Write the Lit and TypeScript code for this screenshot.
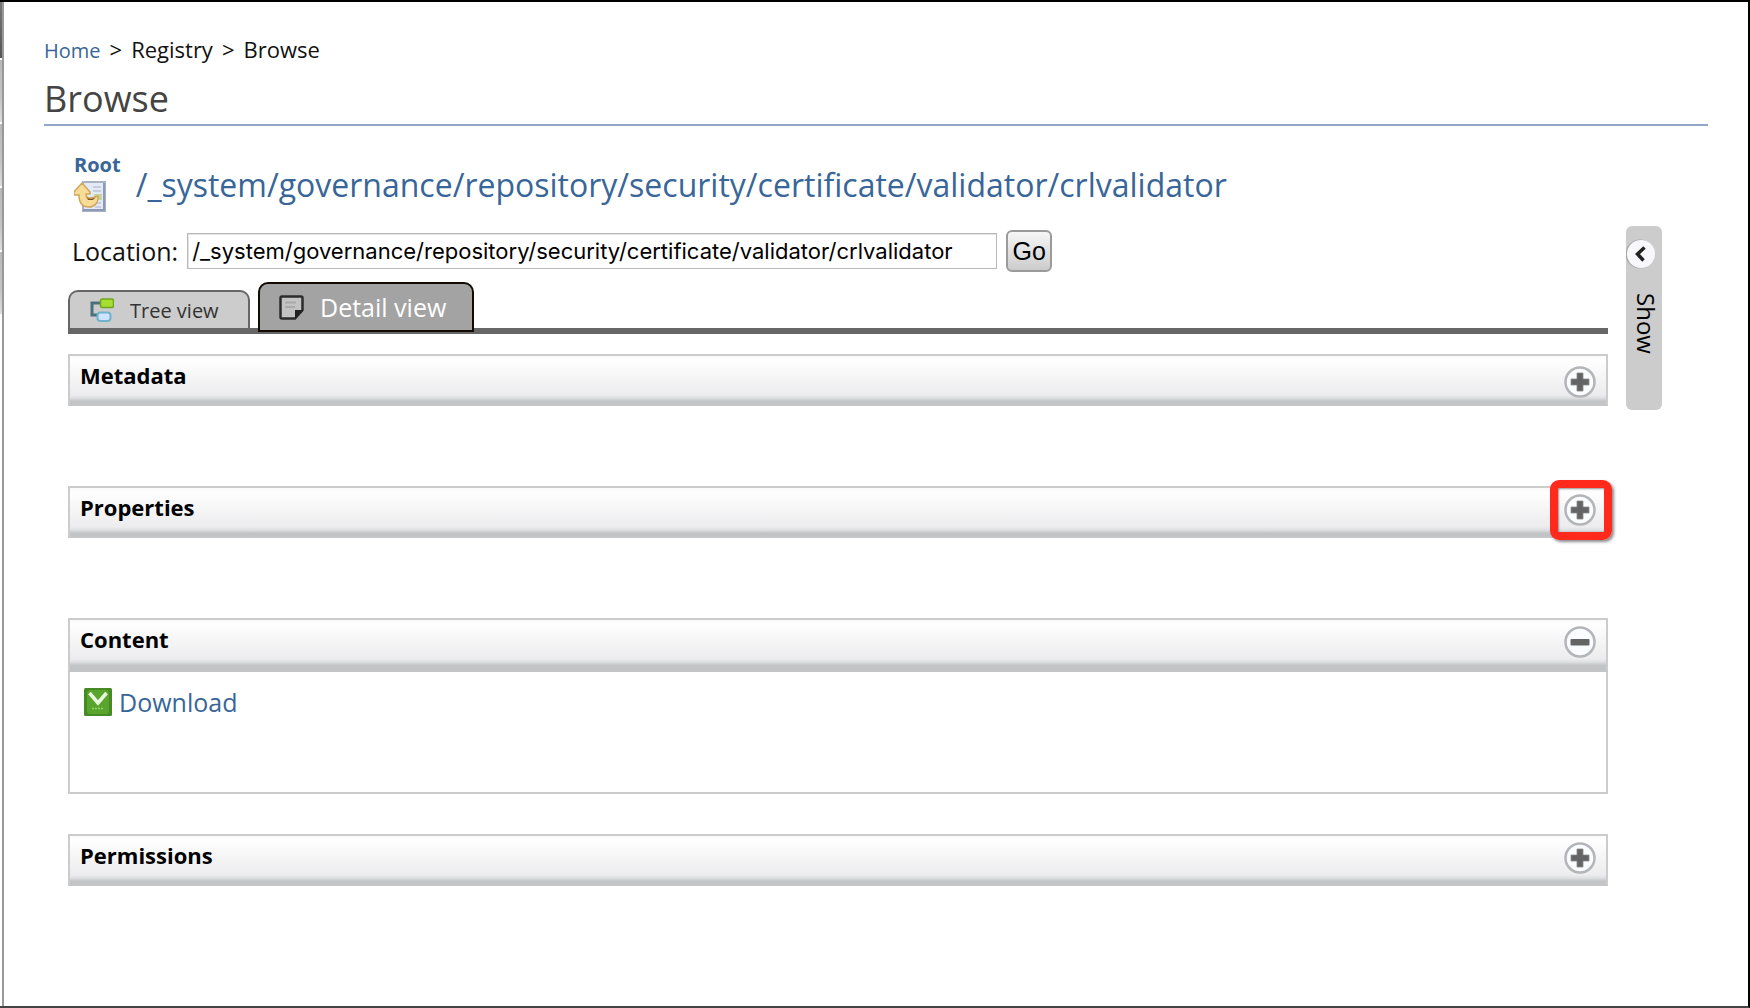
import { LitElement, html, css, svg } from "lit";
import { customElement, property, state } from "lit/decorators.js";

const RESOURCE_PATH = "/_system/governance/repository/security/certificate/validator/crlvalidator";

const pathIcon = svg`
  <path d="M9 1H31V30H9Z" fill="#e4eaf5" stroke="#a9b2c4" stroke-width="2"/>
  <path d="M29 2H31V30H9V28H29Z" fill="#8c9ab5"/>
  <path d="M19 6h8M19 10h8M21 22h6M21 26h6" stroke="#b9c4da" stroke-width="1.5"/>
  <path d="M20 13h8v6h-8z" fill="#c2d79f"/>
  <path d="M8 2L16 11V13H12C12 18 16 18 24 15C25 22 20 26 15 26C8 26 5 21 5 14H0V11Z" fill="#f7dc96" stroke="#cfa75c" stroke-width="1.5" stroke-linejoin="round"/>
  <path d="M12 15C14 19 19 18 22 16L19 19H14Z" fill="#7d5a25"/>`;

@customElement("registry-section")
export class RegistrySection extends LitElement {
  @property() heading = "";
  @property({ type: Boolean, reflect: true }) open = false;
  @property({ type: Boolean, reflect: true }) marked = false;
  @property({ type: Boolean, reflect: true }) lead = false;

  static styles = css`
    :host { display: block; }
    .head {
      display: flex; align-items: flex-start; justify-content: space-between;
      box-sizing: border-box; height: 52px;
      border: 2px solid #ccc; border-bottom-color: #c4c5c6;
      background: linear-gradient(#fafafa 0, #fefefe 5px, #ececee 39px, #dfe0e1 42px, #c4c5c7 45px, #c2c3c5 100%);
    }
    .head.open { height: 54px; }
    h2 { margin: 0; padding: 4px 0 0 10px; font-size: 22px; line-height: 30px; font-weight: 700; color: #000; }
    .toggle {
      position: relative; display: block; width: 32px; height: 32px; margin: 6px 10px 0 0; padding: 0;
      border: 0; background: none; cursor: pointer;
    }
    .head.lead .toggle { margin-top: 10px; }
    .toggle svg { display: block; }
    .ring {
      position: absolute; left: -14px; top: -14px; box-sizing: border-box; width: 62px; height: 60px;
      border: 8px solid #ff2a1c; border-radius: 9px; pointer-events: none;
      box-shadow: 2px 2px 3px rgba(0, 0, 0, .45), inset 1px 1px 2px rgba(0, 0, 0, .4);
    }
    .body { box-sizing: border-box; min-height: 122px; padding: 14px; border: 2px solid #ccc; border-top: 0; }
  `;

  private toggle() {
    this.open = !this.open;
  }

  render() {
    const modifiers = `${this.open ? " open" : ""}${this.lead ? " lead" : ""}`;
    return html`
      <div class="head${modifiers}">
        <h2>${this.heading}</h2>
        <button class="toggle" type="button" aria-label=${this.heading} aria-expanded=${this.open} @click=${this.toggle}>
          <svg width="32" height="32" viewBox="0 0 32 32" aria-hidden="true">
            <circle cx="16" cy="16" r="14.5" fill="#fafcff" stroke="#b4b5b9" stroke-width="2.5"/>
            ${this.open
              ? svg`<rect x="6.5" y="13" width="19" height="6.5" rx="1" fill="#646464"/>`
              : svg`<path d="M13 7h6v6h6v6h-6v6h-6v-6h-6v-6h6z" fill="#646464" stroke="#8a8a8a" stroke-width=".8"/>`}
          </svg>
          ${this.marked ? html`<span class="ring"></span>` : null}
        </button>
      </div>
      ${this.open ? html`<div class="body"><slot></slot></div>` : null}
    `;
  }
}

@customElement("app-root")
export class AppRoot extends LitElement {
  @state() private path = RESOURCE_PATH;

  static styles = css`
    :host { display: block; font-family: "Open Sans", "Noto Sans", sans-serif; color: #111; }
    a { color: #386698; text-decoration: none; }
    .frame {
      display: grid; grid-template-columns: 2px minmax(0, 1fr); box-sizing: border-box; min-height: 100vh;
      border: 0 solid #000; border-width: 2px 2px 2px 0; border-bottom-color: #444; background: #fff;
    }
    .rail { display: flex; flex-direction: column; gap: 2px; }
    .rail i { height: 62px; background: linear-gradient(#b8b8b8, #c4c4c4 60%, #dcdcdc); }
    .rail i:first-child { height: 56px; background: linear-gradient(#777, #555); }
    .page { border-left: 2px solid #999; padding: 31px 40px 40px 40px; }
    .crumbs { display: flex; align-items: baseline; gap: 9px; font-size: 22px; line-height: 32px; }
    .crumbs a { font-size: 20px; }
    h1 {
      margin: 8px 0 0; padding-bottom: 1px; border-bottom: 2px solid #93a7c8;
      font-size: 36px; line-height: 48px; font-weight: 400; color: #444;
    }
    .columns { display: flex; align-items: flex-start; gap: 18px; padding: 23px 46px 0 24px; }
    .main { flex: 1; min-width: 0; }
    .resource { display: flex; align-items: center; gap: 15px; padding-left: 6px; }
    .root { display: flex; flex-direction: column; font-size: 20px; line-height: 28px; font-weight: 700; padding-top: 2px; }
    .root svg { display: block; margin-top: 2px; }
    .path { font-size: 32px; line-height: 44px; padding-top: 8px; }
    .locate { display: flex; align-items: center; gap: 9px; margin-top: 18px; padding-left: 4px; font-size: 25px; }
    .locate label { line-height: 42px; }
    .locate input {
      box-sizing: border-box; width: 810px; max-width: 60%; height: 36px; padding: 0 4px; color: #000;
      border: 1px solid #b8b8b8; box-shadow: inset 1px 1px 0 #e4e4e4; font: 22px/30px Inter, sans-serif;
    }
    .locate button {
      box-sizing: border-box; width: 46px; height: 42px; padding: 0; border: 2px solid #9a9a9a; border-radius: 6px;
      background: linear-gradient(#f6f6f6, #ddd 60%, #ccc); color: #000;
      font: 25px/36px "Liberation Sans", Arial, sans-serif;
    }
    .tabs { display: flex; align-items: flex-end; gap: 8px; height: 52px; margin-top: 10px; background: linear-gradient(#666, #666) left bottom / 100% 6px no-repeat; }
    .tab { display: flex; align-items: center; gap: 16px; box-sizing: border-box; border: 2px solid #666; border-radius: 10px 10px 0 0; white-space: nowrap; }
    .tree {
      width: 182px; height: 38px; margin-bottom: 6px; padding: 0 0 0 20px;
      border-bottom: 0; background: #ccc; color: #333; font-size: 20px;
    }
    .detail {
      width: 216px; height: 50px; margin-bottom: 2px; padding: 0 0 0 19px;
      border-color: #120a04; background: #a3a3a3; color: #fff; font-size: 25px; font-weight: 500;
    }
    .sections { display: flex; flex-direction: column; padding-top: 20px; }
    .wide { margin-bottom: 80px; }
    .narrow { margin-bottom: 40px; }
    .download { display: inline-flex; align-items: center; gap: 7px; font-size: 25px; line-height: 32px; }
    .side {
      display: flex; flex-direction: column; align-items: flex-start; flex: none; box-sizing: border-box;
      width: 36px; height: 184px; margin-top: 77px; padding: 13px 0 0; border: 0; border-radius: 6px;
      background: #ccc; color: #000; font: 24px/40px "Open Sans", "Noto Sans", sans-serif;
    }
    .side span { writing-mode: vertical-rl; margin-top: 24px; }
  `;

  private onInput(e: Event) {
    this.path = (e.target as HTMLInputElement).value;
  }

  render() {
    return html`
      <div class="frame">
        <div class="rail" aria-hidden="true"><i></i><i></i><i></i><i></i><i></i></div>
        <div class="page">
          <nav class="crumbs"><a href="#">Home</a><span>&gt;</span><span>Registry</span><span>&gt;</span><span>Browse</span></nav>
          <h1>Browse</h1>
          <div class="columns">
            <main class="main">
              <div class="resource">
                <a class="root" href="#">Root
                  <svg width="32" height="31" viewBox="0 0 32 31" aria-hidden="true">${pathIcon}</svg>
                </a>
                <a class="path" href="#">${RESOURCE_PATH}</a>
              </div>
              <div class="locate">
                <label for="location">Location:</label>
                <input id="location" type="text" .value=${this.path} @input=${this.onInput} />
                <button type="button">Go</button>
              </div>
              <nav class="tabs">
                <a class="tab tree" href="#">
                  <svg width="24" height="24" viewBox="0 0 24 24" aria-hidden="true">
                    <path d="M11 5H2V17H9" fill="none" stroke="#49707c" stroke-width="3"/>
                    <rect x="10.5" y="1" width="13" height="8.5" rx="2" fill="#a5df32" stroke="#72a51c" stroke-width="1.5"/>
                    <rect x="7.5" y="14.5" width="13" height="8.5" rx="3" fill="#cfe3ff" stroke="#6fb4cb" stroke-width="2"/>
                  </svg>Tree view</a>
                <a class="tab detail" href="#">
                  <svg width="25" height="25" viewBox="0 0 25 25" aria-hidden="true">
                    <path d="M3 1.5H22Q23.5 1.5 23.5 3V15L16 23.5H3Q1.5 23.5 1.5 22V3Q1.5 1.5 3 1.5Z" fill="#c3c3c3" stroke="#2c2c2c" stroke-width="2.5"/>
                    <path d="M16 24V15H24V16Z" fill="#222"/>
                    <path d="M6 7.5h11M6 12h10" stroke="#aaa" stroke-width="2"/>
                  </svg>Detail view</a>
              </nav>
              <div class="sections">
                <registry-section class="wide" heading="Metadata" lead></registry-section>
                <registry-section class="wide" heading="Properties" marked></registry-section>
                <registry-section class="narrow" heading="Content" open>
                  <a class="download" href="#">
                    <svg width="28" height="28" viewBox="0 0 28 28" aria-hidden="true">
                      <rect width="28" height="28" rx="1.5" fill="#468a24"/>
                      <rect x="3" y="2" width="22" height="24" rx="3" fill="#58a42c"/>
                      <path d="M5.5 5L14 15L22.5 5" fill="none" stroke="#e9f8dc" stroke-width="3.5"/>
                      <path d="M8 20.5h12" stroke="#9bd070" stroke-width="1.5" stroke-dasharray="2 1"/>
                    </svg>Download</a>
                </registry-section>
                <registry-section heading="Permissions"></registry-section>
              </div>
            </main>
            <button class="side" type="button">
              <svg width="30" height="30" viewBox="0 0 30 30" aria-hidden="true">
                <circle cx="14" cy="15" r="14.5" fill="#aaa"/>
                <circle cx="15" cy="15" r="14" fill="#f8f8fc"/>
                <path d="M18.5 8.5L11.5 15L17.5 21.5" fill="none" stroke="#222" stroke-width="3.5"/>
              </svg>
              <span>Show</span>
            </button>
          </div>
        </div>
      </div>
    `;
  }
}
